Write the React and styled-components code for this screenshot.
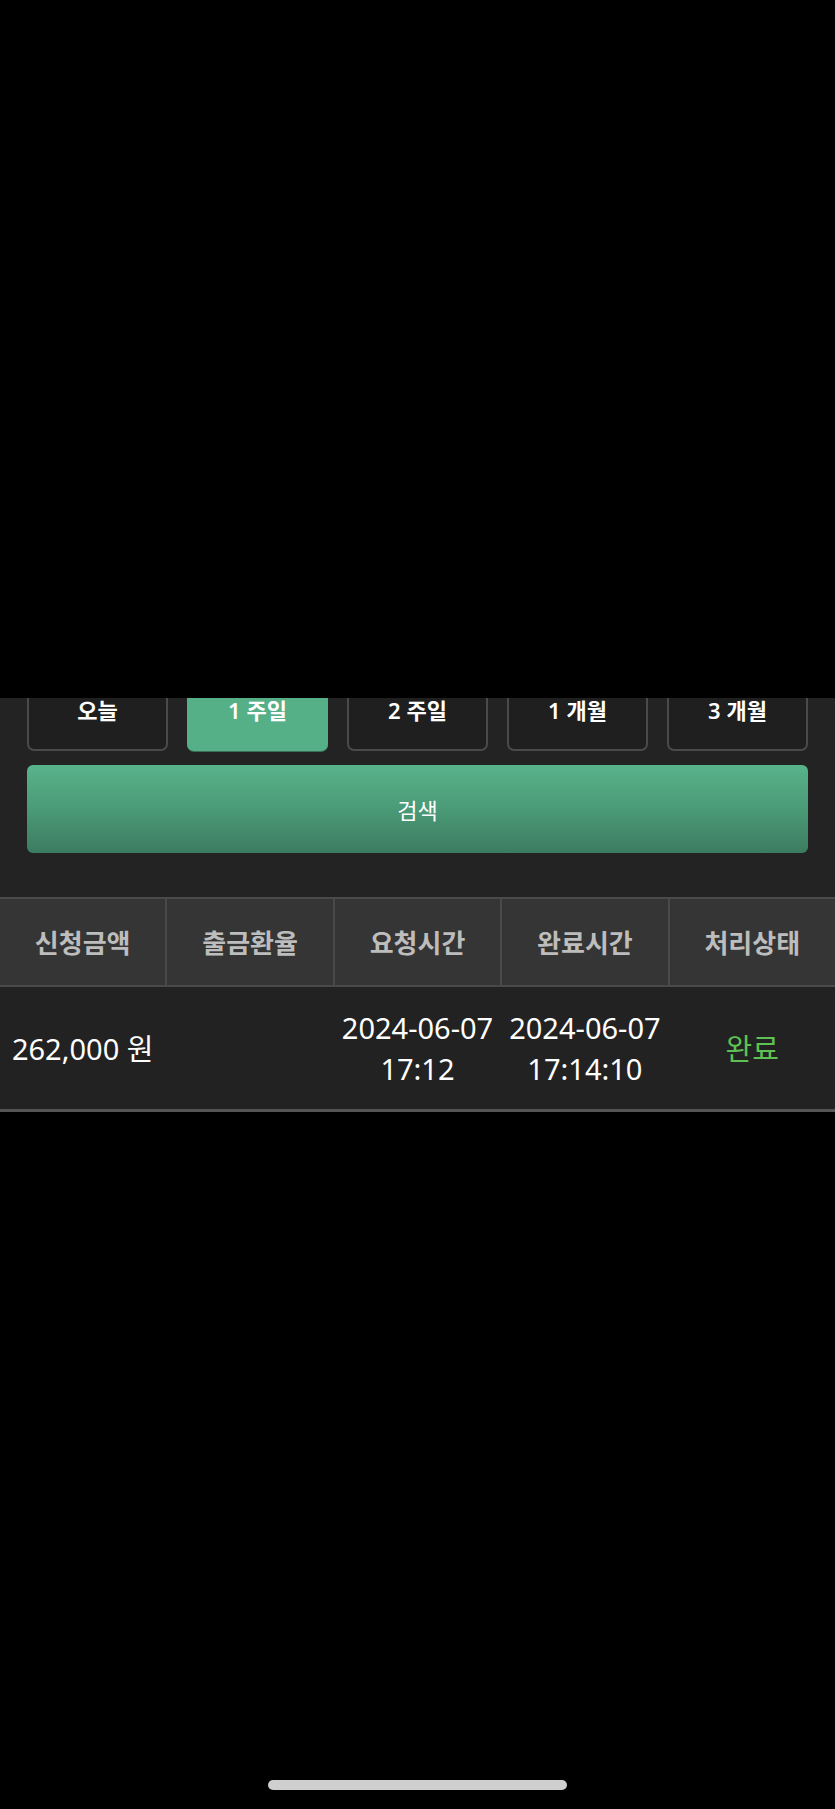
import React from "react";
import styled, { createGlobalStyle } from "styled-components";

const GlobalStyle = createGlobalStyle`
  html, body {
    margin: 0;
    padding: 0;
    background: #000;
  }
  * { box-sizing: border-box; }
`;

const Page = styled.div`
  width: 835px;
  min-height: 1809px;
  background: #000;
  display: flex;
  flex-direction: column;
  font-family: "Noto Sans", "Noto Sans CJK KR", sans-serif;
`;

const TopArea = styled.div`
  height: 698px;
  background: #000;
`;

const FilterPanel = styled.section`
  background: #232323;
  padding: 0 27px 44px 27px;
  overflow: hidden;
`;

const PeriodRow = styled.div`
  display: grid;
  grid-template-columns: repeat(5, 1fr);
  column-gap: 19px;
  margin-top: -29px;
`;

const PeriodButton = styled.button`
  height: 82px;
  border-radius: 7px;
  border: 2px solid ${(p) => (p.$active ? "#55b088" : "#4a4a4a")};
  background: ${(p) => (p.$active ? "#55b088" : "#1f1f1f")};
  box-shadow: ${(p) => (p.$active ? "0 1px 0 #3a6e57" : "none")};
  color: #fff;
  font-family: "Noto Sans", "Noto Sans CJK KR", sans-serif;
  font-size: 22px;
  line-height: 22px;
  font-weight: 600;
  display: flex;
  align-items: center;
  justify-content: center;
  padding: 0;
`;

const SearchButton = styled.button`
  width: 100%;
  height: 88px;
  margin-top: 14px;
  border: none;
  border-radius: 6px;
  background: linear-gradient(180deg, #58b38b 0%, #4a9a76 50%, #3c7c60 100%);
  color: #fff;
  font-family: "Noto Sans", "Noto Sans CJK KR", sans-serif;
  font-size: 22px;
  font-weight: 400;
  display: flex;
  align-items: center;
  justify-content: center;
`;

const Table = styled.div`
  display: flex;
  flex-direction: column;
`;

const HeaderRow = styled.div`
  display: grid;
  grid-template-columns: repeat(5, 1fr);
  column-gap: 2px;
  background: #4a4a4a;
  border-top: 2px solid #4a4a4a;
  border-bottom: 2px solid #4a4a4a;
`;

const HeaderCell = styled.div`
  background: #353535;
  height: 86px;
  display: flex;
  align-items: center;
  justify-content: center;
  color: #bdbdbd;
  font-size: 26px;
  font-weight: 700;
`;

const BodyRow = styled.div`
  display: grid;
  grid-template-columns: repeat(5, 1fr);
  column-gap: 2px;
  background: #222;
  height: 125px;
  border-bottom: 3px solid #555;
`;

const BodyCell = styled.div`
  display: flex;
  flex-direction: column;
  align-items: center;
  justify-content: center;
  text-align: center;
  color: ${(p) => p.$color || "#fff"};
  font-size: 29px;
  line-height: 41px;
  white-space: nowrap;
`;

const Spacer = styled.div`
  flex: 1;
`;

const HomeIndicator = styled.div`
  align-self: center;
  width: 299px;
  height: 10px;
  border-radius: 5px;
  background: #cfcfcf;
  margin-bottom: 19px;
`;

const periods = ["오늘", "1 주일", "2 주일", "1 개월", "3 개월"];
const headers = ["신청금액", "출금환율", "요청시간", "완료시간", "처리상태"];

export default function App() {
  return (
    <>
      <GlobalStyle />
      <Page>
        <TopArea />
        <FilterPanel>
          <PeriodRow>
            {periods.map((p, i) => (
              <PeriodButton key={p} $active={i === 1}>
                {p}
              </PeriodButton>
            ))}
          </PeriodRow>
          <SearchButton>검색</SearchButton>
        </FilterPanel>
        <Table>
          <HeaderRow>
            {headers.map((h) => (
              <HeaderCell key={h}>{h}</HeaderCell>
            ))}
          </HeaderRow>
          <BodyRow>
            <BodyCell>262,000 원</BodyCell>
            <BodyCell />
            <BodyCell>
              <span>2024-06-07</span>
              <span>17:12</span>
            </BodyCell>
            <BodyCell>
              <span>2024-06-07</span>
              <span>17:14:10</span>
            </BodyCell>
            <BodyCell $color="#5ec154">완료</BodyCell>
          </BodyRow>
        </Table>
        <Spacer />
        <HomeIndicator />
      </Page>
    </>
  );
}
